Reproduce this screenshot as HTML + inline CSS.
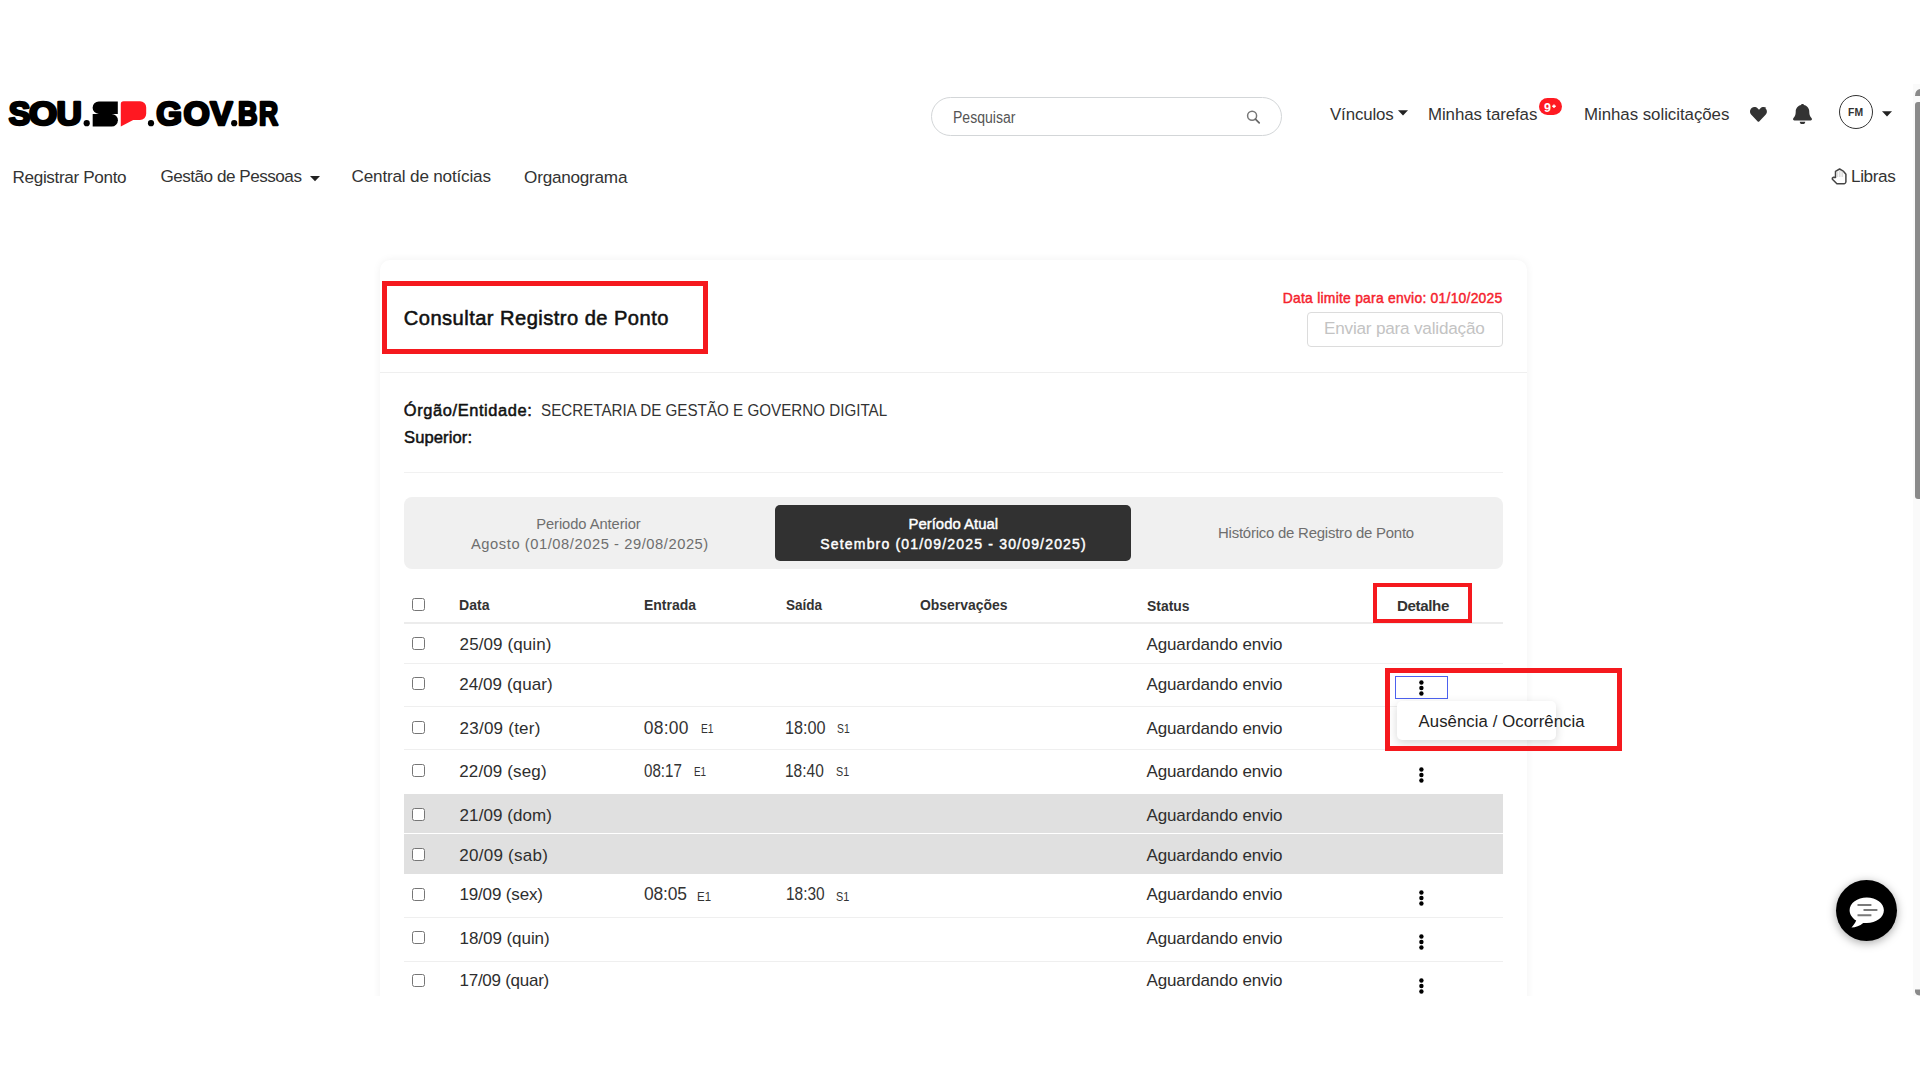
<!DOCTYPE html>
<html lang="pt-BR"><head><meta charset="utf-8"><title>Consultar Registro de Ponto</title>
<style>
html,body{margin:0;padding:0;background:#fff;width:1920px;height:1080px;overflow:hidden;position:relative}
body{font-family:"Liberation Sans",sans-serif}
.abs{position:absolute}
.t{position:absolute;white-space:nowrap;line-height:1;font-family:"Liberation Sans",sans-serif}
</style></head><body>
<svg class="abs" style="left:0;top:0" width="300" height="160" viewBox="0 0 300 160">
<g font-family="Liberation Sans" font-weight="bold" fill="#000" stroke="#000" stroke-width="2.6" stroke-linejoin="round">
<text x="8.82" y="125.15" font-size="32.6" textLength="21.50" lengthAdjust="spacingAndGlyphs">S</text>
<text x="28.90" y="125.15" font-size="32.6" textLength="28.21" lengthAdjust="spacingAndGlyphs">O</text>
<text x="56.52" y="125.15" font-size="32.6" textLength="25.29" lengthAdjust="spacingAndGlyphs">U</text>
<text x="156.17" y="125.15" font-size="32.6" textLength="25.72" lengthAdjust="spacingAndGlyphs">G</text>
<text x="183.64" y="125.15" font-size="32.6" textLength="26.25" lengthAdjust="spacingAndGlyphs">O</text>
<text x="210.37" y="125.15" font-size="32.6" textLength="22.27" lengthAdjust="spacingAndGlyphs">V</text>
<text x="237.96" y="125.15" font-size="32.6" textLength="19.52" lengthAdjust="spacingAndGlyphs">B</text>
<text x="259.04" y="125.15" font-size="32.6" textLength="19.09" lengthAdjust="spacingAndGlyphs">R</text>
</g>
<circle cx="86.7" cy="123.2" r="3.1" fill="#000"/>
<circle cx="151" cy="123.2" r="3.1" fill="#000"/>
<circle cx="234.2" cy="123.2" r="3.1" fill="#000"/>
<path d="M117.8 101.5 H98.8 A6.1 6.1 0 0 0 98.8 113.9 H117.8 Z" fill="#000"/>
<path d="M92.7 113.9 H111.6 A6.3 6.3 0 0 1 111.6 126.5 H92.7 Z" fill="#000"/>
<path d="M123.6 101.3 H140 A6.2 6.2 0 0 1 146.2 107.5 V113.8 A6.2 6.2 0 0 1 140 120 H133.2 L120.8 126.4 V104.1 A2.8 2.8 0 0 1 123.6 101.3 Z" fill="#ff1821"/>
</svg>
<div class="abs" style="left:930.5px;top:97px;width:351px;height:39px;border:1px solid #d3d6d8;border-radius:20px;box-sizing:border-box;"></div>
<div class="t" style="left:953.00px;top:110.20px;font-size:16.00px;letter-spacing:0.000px;color:#555;transform:scaleX(0.8784);transform-origin:0 0;">Pesquisar</div>
<svg class="abs" style="left:1240px;top:104px" width="30" height="30" viewBox="0 0 30 30"><circle cx="12.1" cy="11.8" r="4.5" fill="none" stroke="#777" stroke-width="1.5"/><path d="M15.4 15.1 L19.2 18.9" stroke="#666" stroke-width="1.7" stroke-linecap="round"/></svg>
<div class="t" style="left:1330.00px;top:106.92px;font-size:16.86px;letter-spacing:-0.129px;color:#333;">Vínculos</div>
<svg class="abs" style="left:1397px;top:109px" width="13" height="9"><path d="M1 1.2 H11 L6 6.4 Z" fill="#222"/></svg>
<div class="t" style="left:1428.00px;top:106.97px;font-size:16.86px;letter-spacing:-0.096px;color:#333;">Minhas tarefas</div>
<div class="abs" style="left:1539.3px;top:98px;width:22.5px;height:17px;border-radius:9px;background:#ff1a22"></div>
<svg class="abs" style="left:1539px;top:98px" width="24" height="18"><text x="5" y="13.6" font-family="Liberation Sans" font-weight="bold" font-size="12.5" fill="#fff">9</text><path d="M13.2 8.3 h3.6 M15 6.5 v3.6" stroke="#fff" stroke-width="1.4"/></svg>
<div class="t" style="left:1584.00px;top:107.41px;font-size:16.86px;letter-spacing:-0.044px;color:#333;">Minhas solicitações</div>
<svg class="abs" style="left:1750px;top:106.5px" width="18" height="15" viewBox="0 0 512 440"><path d="M471.6 30.6C418.9-14.3 340.5-6.2 292.1 43.7L256 81l-36.1-37.3C171.6-6.2 93.1-14.3 40.4 30.6c-60.4 51.5-63.6 144-9.6 199.9l187.1 193.1c12.1 12.5 31.8 12.5 43.9 0l187.1-193.1c54.1-55.8 50.9-148.4-9.3-199.9z" fill="#333"/></svg>
<svg class="abs" style="left:1793.3px;top:103.8px" width="19" height="20.5" viewBox="0 0 448 484"><path d="M224 484c35.3 0 64-28.7 64-64H160c0 35.3 28.7 64 64 64zm215.4-149.7c-19.3-20.8-55.5-52-55.5-154.3 0-77.7-54.5-139.9-127.9-155.2V24c0-17.7-14.3-32-32-32s-32 14.3-32 32v.8C118.6 40.1 64.1 102.3 64.1 180c0 102.3-36.2 133.5-55.5 154.3-6 6.4-8.7 14.1-8.6 21.7.1 16.4 13 32 32.1 32h383.8c19.1 0 32-15.6 32.1-32 .1-7.6-2.6-15.3-8.6-21.7z" fill="#333"/></svg>
<div class="abs" style="left:1838.5px;top:95px;width:34px;height:34px;border:1.5px solid #333;border-radius:50%;box-sizing:border-box"></div>
<svg class="abs" style="left:1838px;top:95px" width="36" height="34"><text x="17.6" y="21.2" text-anchor="middle" font-family="Liberation Sans" font-weight="bold" font-size="10" fill="#333" textLength="15" lengthAdjust="spacingAndGlyphs">FM</text></svg>
<svg class="abs" style="left:1881px;top:109.5px" width="13" height="9"><path d="M1 1.2 H11 L6 6.4 Z" fill="#222"/></svg>
<div class="t" style="left:12.50px;top:168.63px;font-size:17.14px;letter-spacing:-0.346px;color:#333;">Registrar Ponto</div>
<div class="t" style="left:160.40px;top:168.23px;font-size:17.14px;letter-spacing:-0.494px;color:#333;">Gestão de Pessoas</div>
<svg class="abs" style="left:308.5px;top:174.5px" width="13" height="9"><path d="M1 1 H11 L6 6.2 Z" fill="#222"/></svg>
<div class="t" style="left:351.60px;top:168.07px;font-size:17.14px;letter-spacing:-0.189px;color:#333;">Central de notícias</div>
<div class="t" style="left:524.10px;top:169.07px;font-size:17.14px;letter-spacing:-0.235px;color:#333;">Organograma</div>
<svg class="abs" style="left:1828px;top:164px" width="24" height="24" viewBox="1828 164 24 24"><path d="M1839.6 169 L1835.5 171.3 V177.4 L1833.6 177.2 Q1832 177.6 1832.4 179.2 L1836.9 183.7 H1844.3 Q1845.7 183.5 1845.9 182 V174.2 L1843.6 171.4 Z" fill="none" stroke="#444" stroke-width="1.5" stroke-linejoin="round"/><path d="M1837.6 171.5 V177 M1839.4 170.5 V177 M1841 170.5 V177 M1842.6 171.5 V177" stroke="#ccc" stroke-width="0.7"/></svg>
<div class="t" style="left:1851.00px;top:167.93px;font-size:17.14px;letter-spacing:-0.380px;color:#333;">Libras</div>
<div class="abs" style="left:1912.5px;top:84px;width:7.5px;height:912px;background:#fafafa"></div>
<div class="abs" style="left:1915px;top:102px;width:5px;height:396.5px;background:#8a8a8a;border-radius:3px 0 0 3px"></div>
<svg class="abs" style="left:1912px;top:86px" width="8" height="12"><path d="M3 10 Q3 4 8 3 V10 Z" fill="#8a8a8a"/></svg>
<svg class="abs" style="left:1912px;top:987px" width="8" height="10"><path d="M3 2.5 H8 V8.5 Q4 8.5 3 5 Z" fill="#8a8a8a"/></svg>
<div class="abs" style="left:379.7px;top:259.7px;width:1147.8px;height:760px;background:#fff;border-radius:10px;box-shadow:0 0 8px rgba(0,0,0,0.06)"></div>
<div class="t" style="left:403.80px;top:308.25px;font-size:20.14px;letter-spacing:0.452px;color:#111;-webkit-text-stroke:0.55px #111;">Consultar Registro de Ponto</div>
<div class="t" style="left:1282.80px;top:292.07px;font-size:13.86px;letter-spacing:0.253px;color:#f5222d;-webkit-text-stroke:0.45px #f5222d;">Data limite para envio: 01/10/2025</div>
<div class="abs" style="left:1307.3px;top:311.6px;width:195.5px;height:35.8px;border:1px solid #dcdcdc;border-radius:4px;box-sizing:border-box"></div>
<div class="t" style="left:1324.00px;top:320.13px;font-size:17.14px;letter-spacing:-0.197px;color:#c3c3c3;">Enviar para validação</div>
<div class="abs" style="left:379.7px;top:372px;width:1147.8px;height:1px;background:#efefef"></div>
<div class="t" style="left:403.80px;top:402.29px;font-size:16.43px;letter-spacing:0.607px;color:#111;-webkit-text-stroke:0.5px #111;">Órgão/Entidade:</div>
<div class="t" style="left:540.70px;top:401.99px;font-size:16.43px;letter-spacing:0.000px;color:#333;transform:scaleX(0.9244);transform-origin:0 0;">SECRETARIA DE GESTÃO E GOVERNO DIGITAL</div>
<div class="t" style="left:404.00px;top:430.07px;font-size:16.57px;letter-spacing:0.106px;color:#111;-webkit-text-stroke:0.5px #111;">Superior:</div>
<div class="abs" style="left:403.6px;top:471.5px;width:1099.4px;height:1px;background:#f1f1f1"></div>
<div class="abs" style="left:403.9px;top:497px;width:1099.1px;height:71.8px;background:#f0f0f0;border-radius:8px"></div>
<div class="abs" style="left:775.2px;top:505px;width:355.5px;height:55.6px;background:#313131;border-radius:5px"></div>
<div class="t" style="left:536.20px;top:516.94px;font-size:14.71px;letter-spacing:-0.060px;color:#6e6e6e;">Periodo Anterior</div>
<div class="t" style="left:471.00px;top:536.94px;font-size:14.71px;letter-spacing:0.560px;color:#6e6e6e;">Agosto (01/08/2025 - 29/08/2025)</div>
<div class="t" style="left:908.50px;top:517.49px;font-size:14.86px;letter-spacing:0.029px;color:#fff;-webkit-text-stroke:0.45px #fff;">Período Atual</div>
<div class="t" style="left:820.30px;top:537.26px;font-size:14.00px;letter-spacing:1.179px;color:#fff;-webkit-text-stroke:0.45px #fff;">Setembro (01/09/2025 - 30/09/2025)</div>
<div class="t" style="left:1218.00px;top:526.39px;font-size:14.93px;letter-spacing:-0.216px;color:#6e6e6e;">Histórico de Registro de Ponto</div>
<div class="abs" style="left:412px;top:597.5px;width:13px;height:13px;border:1px solid #767676;border-radius:2.5px;box-sizing:border-box;background:#fff"></div>
<div class="t" style="left:459.20px;top:596.74px;font-size:15.00px;letter-spacing:0.000px;color:#333;font-weight:bold;transform:scaleX(0.9387);transform-origin:0 0;">Data</div>
<div class="t" style="left:643.70px;top:597.20px;font-size:15.00px;letter-spacing:0.000px;color:#333;font-weight:bold;transform:scaleX(0.9312);transform-origin:0 0;">Entrada</div>
<div class="t" style="left:786.01px;top:597.04px;font-size:15.00px;letter-spacing:0.000px;color:#333;font-weight:bold;transform:scaleX(0.9029);transform-origin:0 0;">Saída</div>
<div class="t" style="left:920.00px;top:597.14px;font-size:15.00px;letter-spacing:0.000px;color:#333;font-weight:bold;transform:scaleX(0.9284);transform-origin:0 0;">Observações</div>
<div class="t" style="left:1146.75px;top:597.60px;font-size:15.00px;letter-spacing:0.000px;color:#333;font-weight:bold;transform:scaleX(0.9269);transform-origin:0 0;">Status</div>
<div class="t" style="left:1396.90px;top:597.69px;font-size:15.14px;letter-spacing:-0.358px;color:#333;font-weight:bold;">Detalhe</div>
<div class="abs" style="left:403.6px;top:621.5px;width:1099.4px;height:2px;background:#ececec"></div>
<div class="abs" style="left:403.6px;top:794.2px;width:1099.4px;height:39px;background:#e0e0e0"></div>
<div class="abs" style="left:403.6px;top:834.2px;width:1099.4px;height:39.4px;background:#e0e0e0"></div>
<div class="abs" style="left:403.6px;top:663.3px;width:1099.4px;height:1px;background:#efefef"></div>
<div class="abs" style="left:403.6px;top:706.0px;width:1099.4px;height:1px;background:#efefef"></div>
<div class="abs" style="left:403.6px;top:749.4px;width:1099.4px;height:1px;background:#efefef"></div>
<div class="abs" style="left:403.6px;top:916.8px;width:1099.4px;height:1px;background:#efefef"></div>
<div class="abs" style="left:403.6px;top:960.6px;width:1099.4px;height:1px;background:#efefef"></div>
<div class="abs" style="left:412px;top:637.1999999999999px;width:13px;height:13px;border:1px solid #767676;border-radius:2.5px;box-sizing:border-box;background:#fff"></div>
<div class="t" style="left:459.60px;top:635.64px;font-size:17.00px;letter-spacing:0.095px;color:#2e2e2e;">25/09 (quin)</div>
<div class="t" style="left:1146.50px;top:635.64px;font-size:17.00px;letter-spacing:-0.133px;color:#2e2e2e;">Aguardando envio</div>
<div class="abs" style="left:412px;top:677.1999999999999px;width:13px;height:13px;border:1px solid #767676;border-radius:2.5px;box-sizing:border-box;background:#fff"></div>
<div class="t" style="left:459.20px;top:675.64px;font-size:17.00px;letter-spacing:0.073px;color:#2e2e2e;">24/09 (quar)</div>
<div class="t" style="left:1146.50px;top:675.64px;font-size:17.00px;letter-spacing:-0.133px;color:#2e2e2e;">Aguardando envio</div>
<div class="abs" style="left:412px;top:720.5px;width:13px;height:13px;border:1px solid #767676;border-radius:2.5px;box-sizing:border-box;background:#fff"></div>
<div class="t" style="left:459.60px;top:719.56px;font-size:17.00px;letter-spacing:0.235px;color:#2e2e2e;">23/09 (ter)</div>
<div class="t" style="left:1146.50px;top:719.56px;font-size:17.00px;letter-spacing:-0.133px;color:#2e2e2e;">Aguardando envio</div>
<div class="t" style="left:643.76px;top:719.53px;font-size:17.43px;letter-spacing:0.275px;color:#333;">08:00</div>
<div class="t" style="left:701.25px;top:721.71px;font-size:13.57px;letter-spacing:0.000px;color:#333;transform:scaleX(0.7553);transform-origin:0 0;">E1</div>
<div class="t" style="left:785.46px;top:719.53px;font-size:17.43px;letter-spacing:0.000px;color:#333;transform:scaleX(0.9313);transform-origin:0 0;">18:00</div>
<div class="t" style="left:837.10px;top:721.71px;font-size:13.57px;letter-spacing:0.000px;color:#333;transform:scaleX(0.7613);transform-origin:0 0;">S1</div>
<div class="abs" style="left:412px;top:763.9px;width:13px;height:13px;border:1px solid #767676;border-radius:2.5px;box-sizing:border-box;background:#fff"></div>
<div class="t" style="left:459.20px;top:762.74px;font-size:17.00px;letter-spacing:0.140px;color:#2e2e2e;">22/09 (seg)</div>
<div class="t" style="left:1146.50px;top:762.74px;font-size:17.00px;letter-spacing:-0.133px;color:#2e2e2e;">Aguardando envio</div>
<div class="t" style="left:644.40px;top:762.73px;font-size:17.43px;letter-spacing:0.000px;color:#333;transform:scaleX(0.8683);transform-origin:0 0;">08:17</div>
<div class="t" style="left:694.30px;top:764.91px;font-size:13.57px;letter-spacing:0.000px;color:#333;transform:scaleX(0.7311);transform-origin:0 0;">E1</div>
<div class="t" style="left:785.10px;top:762.73px;font-size:17.43px;letter-spacing:0.000px;color:#333;transform:scaleX(0.8889);transform-origin:0 0;">18:40</div>
<div class="t" style="left:835.89px;top:764.91px;font-size:13.57px;letter-spacing:0.000px;color:#333;transform:scaleX(0.7946);transform-origin:0 0;">S1</div>
<svg class="abs" style="left:1416px;top:765.2px" width="11" height="20"><circle cx="5.4" cy="4.5" r="2.2" fill="#000"/><circle cx="5.4" cy="10" r="2.2" fill="#000"/><circle cx="5.4" cy="15.5" r="2.2" fill="#000"/></svg>
<div class="abs" style="left:412px;top:808.1999999999999px;width:13px;height:13px;border:1px solid #767676;border-radius:2.5px;box-sizing:border-box;background:#fff"></div>
<div class="t" style="left:459.60px;top:806.64px;font-size:17.00px;letter-spacing:0.065px;color:#2e2e2e;">21/09 (dom)</div>
<div class="t" style="left:1146.50px;top:806.64px;font-size:17.00px;letter-spacing:-0.133px;color:#2e2e2e;">Aguardando envio</div>
<div class="abs" style="left:412px;top:847.5px;width:13px;height:13px;border:1px solid #767676;border-radius:2.5px;box-sizing:border-box;background:#fff"></div>
<div class="t" style="left:459.30px;top:846.56px;font-size:17.00px;letter-spacing:0.250px;color:#2e2e2e;">20/09 (sab)</div>
<div class="t" style="left:1146.50px;top:846.56px;font-size:17.00px;letter-spacing:-0.133px;color:#2e2e2e;">Aguardando envio</div>
<div class="abs" style="left:412px;top:887.8px;width:13px;height:13px;border:1px solid #767676;border-radius:2.5px;box-sizing:border-box;background:#fff"></div>
<div class="t" style="left:459.40px;top:886.44px;font-size:17.00px;letter-spacing:-0.145px;color:#2e2e2e;">19/09 (sex)</div>
<div class="t" style="left:1146.50px;top:886.44px;font-size:17.00px;letter-spacing:-0.133px;color:#2e2e2e;">Aguardando envio</div>
<div class="t" style="left:644.00px;top:886.43px;font-size:17.43px;letter-spacing:-0.162px;color:#333;">08:05</div>
<div class="t" style="left:697.00px;top:889.61px;font-size:13.57px;letter-spacing:0.000px;color:#333;transform:scaleX(0.8459);transform-origin:0 0;">E1</div>
<div class="t" style="left:785.50px;top:886.43px;font-size:17.43px;letter-spacing:0.000px;color:#333;transform:scaleX(0.8866);transform-origin:0 0;">18:30</div>
<div class="t" style="left:835.90px;top:889.61px;font-size:13.57px;letter-spacing:0.000px;color:#333;transform:scaleX(0.8036);transform-origin:0 0;">S1</div>
<svg class="abs" style="left:1416px;top:887.7px" width="11" height="20"><circle cx="5.4" cy="4.5" r="2.2" fill="#000"/><circle cx="5.4" cy="10" r="2.2" fill="#000"/><circle cx="5.4" cy="15.5" r="2.2" fill="#000"/></svg>
<div class="abs" style="left:412px;top:931.3px;width:13px;height:13px;border:1px solid #767676;border-radius:2.5px;box-sizing:border-box;background:#fff"></div>
<div class="t" style="left:459.50px;top:929.94px;font-size:17.00px;letter-spacing:-0.050px;color:#2e2e2e;">18/09 (quin)</div>
<div class="t" style="left:1146.50px;top:929.94px;font-size:17.00px;letter-spacing:-0.133px;color:#2e2e2e;">Aguardando envio</div>
<svg class="abs" style="left:1416px;top:932.0px" width="11" height="20"><circle cx="5.4" cy="4.5" r="2.2" fill="#000"/><circle cx="5.4" cy="10" r="2.2" fill="#000"/><circle cx="5.4" cy="15.5" r="2.2" fill="#000"/></svg>
<div class="abs" style="left:412px;top:974.1px;width:13px;height:13px;border:1px solid #767676;border-radius:2.5px;box-sizing:border-box;background:#fff"></div>
<div class="t" style="left:459.50px;top:972.36px;font-size:17.00px;letter-spacing:-0.264px;color:#2e2e2e;">17/09 (quar)</div>
<div class="t" style="left:1146.50px;top:972.36px;font-size:17.00px;letter-spacing:-0.133px;color:#2e2e2e;">Aguardando envio</div>
<svg class="abs" style="left:1416px;top:975.6px" width="11" height="20"><circle cx="5.4" cy="4.5" r="2.2" fill="#000"/><circle cx="5.4" cy="10" r="2.2" fill="#000"/><circle cx="5.4" cy="15.5" r="2.2" fill="#000"/></svg>
<div class="abs" style="left:1394.9px;top:675.6px;width:53.2px;height:23.7px;border:1.8px solid #4d61ef;box-sizing:border-box"></div>
<svg class="abs" style="left:1416px;top:677.6px" width="11" height="20"><circle cx="5.4" cy="4.5" r="2.2" fill="#000"/><circle cx="5.4" cy="10" r="2.2" fill="#000"/><circle cx="5.4" cy="15.5" r="2.2" fill="#000"/></svg>
<div class="abs" style="left:1397.2px;top:700.7px;width:159.2px;height:39px;background:#fff;border-radius:5px;box-shadow:0 3px 10px rgba(0,0,0,0.16)"></div>
<div class="t" style="left:1418.60px;top:714.14px;font-size:16.71px;letter-spacing:0.090px;color:#222;">Ausência / Ocorrência</div>
<div class="abs" style="left:382px;top:281px;width:326px;height:73px;border:5px solid #f5191e;box-sizing:border-box"></div>
<div class="abs" style="left:1373.2px;top:583.1px;width:98.5px;height:40.3px;border:4.7px solid #f5191e;box-sizing:border-box"></div>
<div class="abs" style="left:1385px;top:668px;width:237px;height:82.8px;border:5px solid #f5191e;box-sizing:border-box"></div>
<div class="abs" style="left:1835.5px;top:879.5px;width:61px;height:61px;border-radius:50%;background:#000;box-shadow:0 2px 10px rgba(0,0,0,0.35)"></div>
<svg class="abs" style="left:1836px;top:880px" width="60" height="60" viewBox="0 0 60 60"><path d="M30.75 17.5 C40.2 17.5 47.9 23.2 47.9 30.25 C47.9 37.3 40.2 43 30.75 43 L27.2 43 C24 45.8 19.5 47.6 15.5 47.6 C17.5 45.5 19.3 43 20.2 40.6 C16.2 38.2 13.6 34.4 13.6 30.25 C13.6 23.2 21.3 17.5 30.75 17.5 Z" fill="#fff"/><path d="M21.5 25.1 h13.9 M27.5 30 h13.9 M21.5 35.3 h13.9" stroke="#7a7a7a" stroke-width="2"/></svg>
<div class="abs" style="left:0;top:996px;width:1920px;height:84px;background:#fff"></div>
</body></html>
